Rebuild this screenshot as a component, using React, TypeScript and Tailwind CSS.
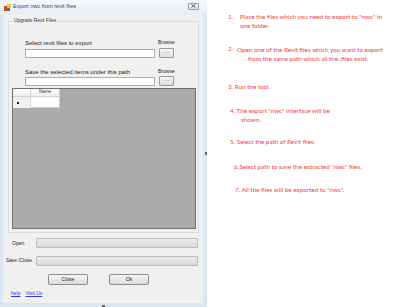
function WinButton({ label, w }: { label: string; w: string }) {
  return (
    <div
      className={`${w} flex h-[11px] items-center justify-center rounded-[2px] border border-[#8c8c8c] bg-gradient-to-b from-[#f4f4f4] to-[#dcdcdc] text-[5px] leading-none text-[#222]`}
    >
      {label}
    </div>
  );
}

function Dots() {
  return (
    <div className="flex h-[10px] w-[15px] items-center justify-center rounded-[1px] border border-[#9a9a9a] bg-gradient-to-b from-[#f6f6f6] to-[#dedede] pb-[2px] text-[4px] leading-none text-[#555]">
      ......
    </div>
  );
}

function Bar() {
  return <div className="h-[10px] w-[162px] rounded-[1px] border border-[#bcbcbc] bg-gradient-to-b from-[#ececec] to-[#dadada]" />;
}

export default function App() {
  return (
    <div className="relative flex h-[307px] w-[400px] overflow-hidden bg-white font-['Liberation_Sans',Arial,sans-serif]">
      {/* dialog window */}
      <div className="flex h-[307px] w-[207px] shrink-0 flex-col bg-[#dbe6f4]">
        <div className="flex h-[14px] items-center bg-gradient-to-b from-[#f5f8fc] to-[#e8eef7] pl-[4px] pr-[8px]">
          <svg width="7" height="7" viewBox="0 0 7 7">
            <rect x="0" y="2" width="4" height="5" fill="#d8402a" />
            <rect x="3" y="0" width="4" height="4" fill="#f2c230" />
            <rect x="3" y="4" width="3" height="3" fill="#3a6fc8" />
          </svg>
          <span className="ml-[2px] text-[5.5px] leading-none text-[#444]">Export nwc from revit files</span>
          <div className="ml-auto mt-[-2px] flex h-[7px] w-[11px] items-center justify-center rounded-[1px] border border-[#8f9db3] bg-gradient-to-b from-[#f4f6f9] to-[#dde3ec]">
            <svg width="5" height="4" viewBox="0 0 5 4">
              <path d="M0.5 0.5 L4.5 3.5 M4.5 0.5 L0.5 3.5" stroke="#555" strokeWidth="0.9" />
            </svg>
          </div>
        </div>

        <div className="mb-[4px] ml-[3px] mr-[4px] flex flex-1 flex-col bg-[#f0f0f0]">
          <fieldset className="ml-[5px] mt-[4px] w-[191px] border border-[#d5dfe5] pb-[3px]">
            <legend className="ml-[4px] px-[1px] text-[4.8px] leading-[6px] text-[#333]">Upgrade Revit Files</legend>

            <div className="mt-[15px] flex h-[8px] items-center">
              <span className="ml-[16px] w-[133px] text-[6px] leading-none text-[#222]">Select revit files to export</span>
              <span className="mt-[-2px] text-[5px] leading-none text-[#222]">Browse</span>
            </div>
            <div className="mt-[1px] flex items-start">
              <div className="ml-[16px] mt-[1px] h-[9px] w-[130px] border border-[#abadb3] bg-white" />
              <div className="ml-[4px]">
                <Dots />
              </div>
            </div>

            <div className="mt-[10px] flex h-[8px] items-center">
              <span className="ml-[16px] w-[133px] text-[6px] leading-none text-[#222]">Save the selected items under this path</span>
              <span className="mt-[-2px] text-[5px] leading-none text-[#222]">Browse</span>
            </div>
            <div className="flex items-start">
              <div className="ml-[16px] mt-[1px] h-[9px] w-[130px] border border-[#abadb3] bg-white" />
              <div className="ml-[4px]">
                <Dots />
              </div>
            </div>

            {/* data grid */}
            <div className="ml-[3px] mt-[2px] h-[141px] w-[184px] border border-[#6f6f6f] bg-[#ababab]">
              <div className="flex h-[8px]">
                <div className="w-[18px] border-b border-r border-[#d0d0d0] bg-gradient-to-b from-white to-[#ededed]" />
                <div className="flex w-[29px] items-center justify-center border-b border-r border-[#d0d0d0] bg-gradient-to-b from-white to-[#ededed] text-[4.5px] leading-none text-[#333]">
                  Name
                </div>
              </div>
              <div className="flex h-[11px]">
                <div className="flex w-[18px] items-center border-r border-[#d0d0d0] bg-[#f0f0f0] pl-[4px]">
                  <div className="h-[2px] w-[2px] bg-[#222]" />
                </div>
                <div className="w-[29px] border-b border-r border-[#d0d0d0] bg-white" />
              </div>
            </div>
          </fieldset>

          <div className="mt-[5px] flex h-[10px] items-center">
            <span className="w-[33px] pl-[9px] text-[5px] leading-none text-[#222]">Open</span>
            <Bar />
          </div>
          <div className="mt-[8px] flex h-[10px] items-center">
            <span className="w-[33px] pl-[3px] text-[4.8px] leading-none text-[#222]">Save /Close</span>
            <Bar />
          </div>

          <div className="ml-[45px] mt-[8px] flex gap-[21px]">
            <WinButton label="Close" w="w-[40px]" />
            <WinButton label="Ok" w="w-[40px]" />
          </div>

          <div className="ml-[8px] mt-[6px] flex gap-[5px] text-[5px] leading-none text-[#2a3fd6]">
            <span className="underline">help</span>
            <span className="underline">Visit Us</span>
          </div>
        </div>
      </div>

      {/* instructions */}
      <div className="flex flex-1 flex-col whitespace-nowrap font-['Lato','Liberation_Sans',sans-serif] text-[6.3px] leading-[9px] text-[#f04444]">
        <div className="mt-[12px] flex pl-[21px]">
          <span className="w-[12px]">1.</span>
          <span>Place the files which you need to export to "nwc" in</span>
        </div>
        <div className="pl-[33px]">one folder.</div>

        <div className="mt-[15px] flex pl-[21px]">
          <span className="mt-[-1px] w-[9px]">2.</span>
          <span>Open one of the Revit files which you want to export</span>
        </div>
        <div className="pl-[41px]">from the same path which all the .files exist.</div>

        <div className="mt-[19px] pl-[21px]">3. Run the tool.</div>

        <div className="mt-[15px] pl-[23px]">4. The export "nwc" interface will be</div>
        <div className="pl-[34px]">shown.</div>

        <div className="mt-[13px] pl-[23px]">5. Select the path of Revit files.</div>
        <div className="mt-[16px] pl-[27px]">6.Select path to save the extracted "nwc" files.</div>
        <div className="mt-[14px] pl-[28px]">7. All the files will be exported to "nwc".</div>
      </div>

      {/* image resize handles */}
      <div className="absolute left-[205px] top-[152px] h-[3px] w-[2px] bg-[#666]" />
      <div className="absolute left-[102px] top-[305px] h-[2px] w-[3px] bg-[#666]" />
    </div>
  );
}
